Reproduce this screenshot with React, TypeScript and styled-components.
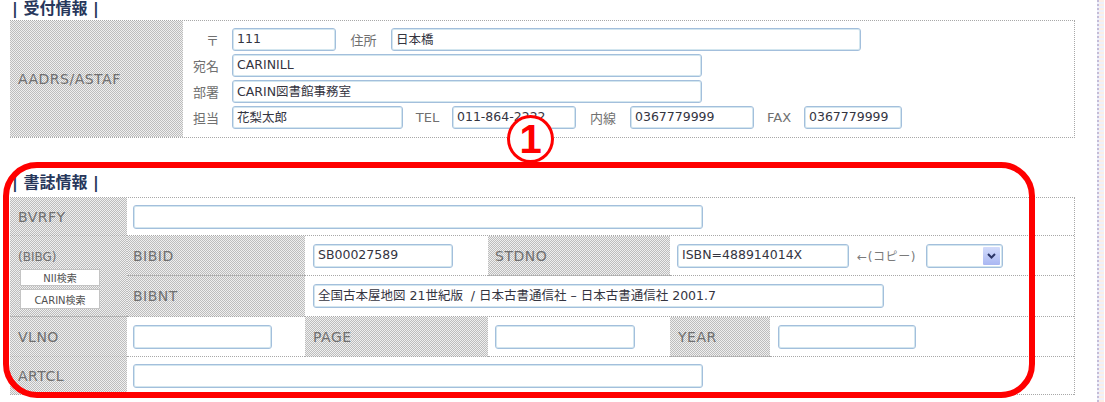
import styled, { createGlobalStyle } from 'styled-components'

const GlobalStyle = createGlobalStyle`
  html, body {
    margin: 0;
    padding: 0;
    background: #fff;
  }
  body {
    font-family: "DejaVu Sans", "Noto Sans CJK JP", sans-serif;
  }
`

const hatch = 'repeating-conic-gradient(#bdbdbd 0 25%, #efefef 0 50%) 0 0 / 2px 2px'
const dotted = '1px dotted #a8a8a8'
const font = '"DejaVu Sans", "Noto Sans CJK JP", sans-serif'

const Root = styled.div`
  position: relative;
  display: flex;
  width: 1105px;
  height: 402px;
  overflow: hidden;
`

const Page = styled.div`
  width: 1065px;
  padding-left: 10px;
`

const EdgeStrip = styled.div`
  margin-left: 22px;
  width: 5px;
  border-left: 2px dotted #c4bcd8;
  background: repeating-linear-gradient(#fbeee6 0 2px, #eef0fb 2px 4px);
`

const SectionTitle = styled.div<{ $top: number; $h: number }>`
  margin-top: ${(p) => p.$top}px;
  height: ${(p) => p.$h}px;
  line-height: ${(p) => p.$h - 3}px;
  padding-left: 2px;
  font-size: 16px;
  font-weight: bold;
  color: #27375b;
  white-space: pre;
`

/* ---------- 受付情報 ---------- */

const ReceptionTable = styled.div`
  display: grid;
  grid-template-columns: 173px 1fr;
  height: 118px;
  box-sizing: border-box;
  border-top: ${dotted};
  border-bottom: ${dotted};
  border-right: ${dotted};
`

const SideLabel = styled.div`
  display: flex;
  align-items: center;
  padding-left: 8px;
  background: ${hatch};
  color: #707070;
  font-size: 14px;
  letter-spacing: 0.5px;
`

const FieldStack = styled.div`
  display: flex;
  flex-direction: column;
  gap: 3px;
  padding: 7px 0 0 4px;
`

const FieldRow = styled.div`
  display: flex;
  align-items: center;
  height: 23px;
`

const RowLabel = styled.span<{ $w: number; $align?: string }>`
  width: ${(p) => p.$w}px;
  flex: none;
  text-align: ${(p) => p.$align ?? 'center'};
  color: #707070;
  font-size: 13px;
  font-family: ${font};
`

const TextBox = styled.input<{ $w: number; $h?: number }>`
  box-sizing: border-box;
  width: ${(p) => p.$w}px;
  height: ${(p) => p.$h ?? 23}px;
  flex: none;
  margin: 0;
  padding: 0 0 3px 4px;
  border: 1px solid #a3bfdc;
  box-shadow: inset 0 0 0 1px #d3e6ef;
  border-radius: 3px;
  background: #fff;
  color: #34343f;
  font-family: ${font};
  font-size: 12.5px;
  outline: none;
`

/* ---------- 書誌情報 ---------- */

const BibTable = styled.div`
  display: grid;
  grid-template-columns: 117px 178px 183px 182px 100px 1fr;
  grid-template-rows: 38px 40px 41px 40px 38px;
  border-top: ${dotted};
  border-right: ${dotted};
`

const Cell = styled.div<{ $c: string; $r: string; $shade?: boolean; $pad?: number; $top?: boolean }>`
  grid-column: ${(p) => p.$c};
  grid-row: ${(p) => p.$r};
  box-sizing: border-box;
  display: flex;
  flex-direction: ${(p) => (p.$top ? 'column' : 'row')};
  align-items: ${(p) => (p.$top ? 'flex-start' : 'center')};
  padding-left: ${(p) => p.$pad ?? 8}px;
  padding-top: ${(p) => (p.$top ? 14 : 0)}px;
  border-bottom: ${dotted};
  background: ${(p) => (p.$shade ? hatch : '#fff')};
  color: #707070;
  font-size: 14px;
  letter-spacing: 0.5px;
`

const GroupTag = styled.span`
  font-size: 12px;
  letter-spacing: 0;
  margin-bottom: 5px;
`

const SearchButton = styled.button<{ $h: number }>`
  box-sizing: border-box;
  width: 80px;
  height: ${(p) => p.$h}px;
  margin: 0 0 3px 2px;
  padding: 0;
  border: 1px solid #c4c4c4;
  background: #fff;
  color: #505050;
  font-family: ${font};
  font-size: 10px;
`

const CopyHint = styled.span`
  margin: 0 4px 0 8px;
  width: 65px;
  color: #7a7a7a;
  font-size: 12px;
  letter-spacing: 0.6px;
  white-space: nowrap;
`

const SelectBox = styled.div`
  box-sizing: border-box;
  display: flex;
  justify-content: flex-end;
  align-items: stretch;
  width: 77px;
  height: 24px;
  padding: 2px;
  border: 1px solid #a3bfdc;
  box-shadow: inset 0 0 0 1px #d3e6ef;
  border-radius: 3px;
  background: #fff;
`

const DropButton = styled.div`
  width: 17px;
  display: flex;
  align-items: center;
  justify-content: center;
  background: linear-gradient(#d3dcfb, #a9b7f2);
  border-radius: 1px;
`

/* ---------- annotation ---------- */

const RedFrame = styled.div`
  position: absolute;
  left: 3px;
  top: 162px;
  width: 1032px;
  height: 236px;
  box-sizing: border-box;
  border: 6px solid #ff0000;
  border-radius: 34px;
  pointer-events: none;
`

const CircleMark = styled.div`
  position: absolute;
  left: 507px;
  top: 115px;
  width: 47px;
  height: 48px;
  box-sizing: border-box;
  border: 3px solid #ff0000;
  border-radius: 50%;
  background: #fff;
  display: flex;
  align-items: center;
  justify-content: center;
  color: #ff0000;
  font-family: "Liberation Sans", sans-serif;
  font-weight: bold;
  font-size: 40px;
  line-height: 1;
`

export default function App() {
  return (
    <Root>
      <GlobalStyle />
      <Page>
        <SectionTitle $top={0} $h={20}>{'| 受付情報 |'}</SectionTitle>
        <ReceptionTable>
          <SideLabel>AADRS/ASTAF</SideLabel>
          <FieldStack>
            <FieldRow>
              <RowLabel $w={32} $align="right">〒</RowLabel>
              <RowLabel $w={13} />
              <TextBox $w={104} readOnly value="111" />
              <RowLabel $w={55}>住所</RowLabel>
              <TextBox $w={470} readOnly value="日本橋" />
            </FieldRow>
            <FieldRow>
              <RowLabel $w={32} $align="right">宛名</RowLabel>
              <RowLabel $w={13} />
              <TextBox $w={470} readOnly value="CARINILL" />
            </FieldRow>
            <FieldRow>
              <RowLabel $w={32} $align="right">部署</RowLabel>
              <RowLabel $w={13} />
              <TextBox $w={470} readOnly value="CARIN図書館事務室" />
            </FieldRow>
            <FieldRow>
              <RowLabel $w={32} $align="right">担当</RowLabel>
              <RowLabel $w={13} />
              <TextBox $w={171} readOnly value="花梨太郎" />
              <RowLabel $w={49}>TEL</RowLabel>
              <TextBox $w={124} readOnly value="011-864-2222" />
              <RowLabel $w={54}>内線</RowLabel>
              <TextBox $w={124} readOnly value="0367779999" />
              <RowLabel $w={50}>FAX</RowLabel>
              <TextBox $w={98} readOnly value="0367779999" />
            </FieldRow>
          </FieldStack>
        </ReceptionTable>

        <SectionTitle $top={34} $h={25}>{'| 書誌情報 |'}</SectionTitle>
        <BibTable>
          <Cell $c="1" $r="1" $shade>BVRFY</Cell>
          <Cell $c="2 / 7" $r="1" $pad={6}>
            <TextBox $w={570} $h={24} readOnly value="" />
          </Cell>

          <Cell $c="1" $r="2 / 4" $shade $top>
            <GroupTag>(BIBG)</GroupTag>
            <SearchButton $h={17}>NII検索</SearchButton>
            <SearchButton $h={20}>CARIN検索</SearchButton>
          </Cell>
          <Cell $c="2" $r="2" $shade $pad={6}>BIBID</Cell>
          <Cell $c="3" $r="2" $pad={8}>
            <TextBox $w={140} $h={24} readOnly value="SB00027589" />
          </Cell>
          <Cell $c="4" $r="2" $shade $pad={7}>STDNO</Cell>
          <Cell $c="5 / 7" $r="2" $pad={7}>
            <TextBox $w={172} $h={24} readOnly value="ISBN=488914014X" />
            <CopyHint>←(コピー)</CopyHint>
            <SelectBox>
              <DropButton>
                <svg width="9" height="6" viewBox="0 0 9 6">
                  <path d="M1 1l3.5 3.5L8 1" fill="none" stroke="#2b3566" strokeWidth="2" />
                </svg>
              </DropButton>
            </SelectBox>
          </Cell>
          <Cell $c="2" $r="3" $shade $pad={6}>BIBNT</Cell>
          <Cell $c="3 / 7" $r="3" $pad={8}>
            <TextBox
              $w={571}
              $h={24}
              readOnly
              value="全国古本屋地図 21世紀版  / 日本古書通信社 – 日本古書通信社 2001.7"
            />
          </Cell>

          <Cell $c="1" $r="4" $shade>VLNO</Cell>
          <Cell $c="2" $r="4" $pad={6}>
            <TextBox $w={139} $h={24} readOnly value="" />
          </Cell>
          <Cell $c="3" $r="4" $shade $pad={8}>PAGE</Cell>
          <Cell $c="4" $r="4" $pad={7}>
            <TextBox $w={140} $h={24} readOnly value="" />
          </Cell>
          <Cell $c="5" $r="4" $shade $pad={8}>YEAR</Cell>
          <Cell $c="6" $r="4" $pad={8}>
            <TextBox $w={138} $h={24} readOnly value="" />
          </Cell>

          <Cell $c="1" $r="5" $shade>ARTCL</Cell>
          <Cell $c="2 / 7" $r="5" $pad={6}>
            <TextBox $w={570} $h={24} readOnly value="" />
          </Cell>
        </BibTable>
      </Page>
      <EdgeStrip />
      <RedFrame />
      <CircleMark>1</CircleMark>
    </Root>
  )
}
